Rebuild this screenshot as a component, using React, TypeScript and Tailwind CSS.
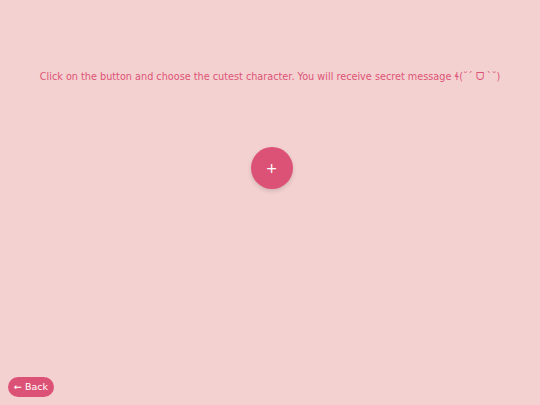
export default function App() {
  return (
    <div className="w-[540px] h-[405px] bg-[#f4d1d1] flex flex-col items-center font-['DejaVu_Sans',sans-serif] text-[#dc5475]">
      <p className="mt-[70px] text-[9.7px] leading-[13px]">
        Click on the button and choose the cutest character. You will receive secret message ɬ(˘ˊ ᗜ ˋ˘)
      </p>
      <button className="mt-[64px] ml-[3px] w-[42px] h-[42px] rounded-full bg-[#dc5276] text-white text-[14px] leading-none flex items-center justify-center shadow-[0_2px_4px_rgba(0,0,0,0.15)]">
        +
      </button>
      <div className="flex-1" />
      <button className="self-start ml-[8px] mb-[8px] h-[20px] px-[6px] rounded-full bg-[#dc5276] text-white text-[9.5px] leading-none">
        ← Back
      </button>
    </div>
  )
}
